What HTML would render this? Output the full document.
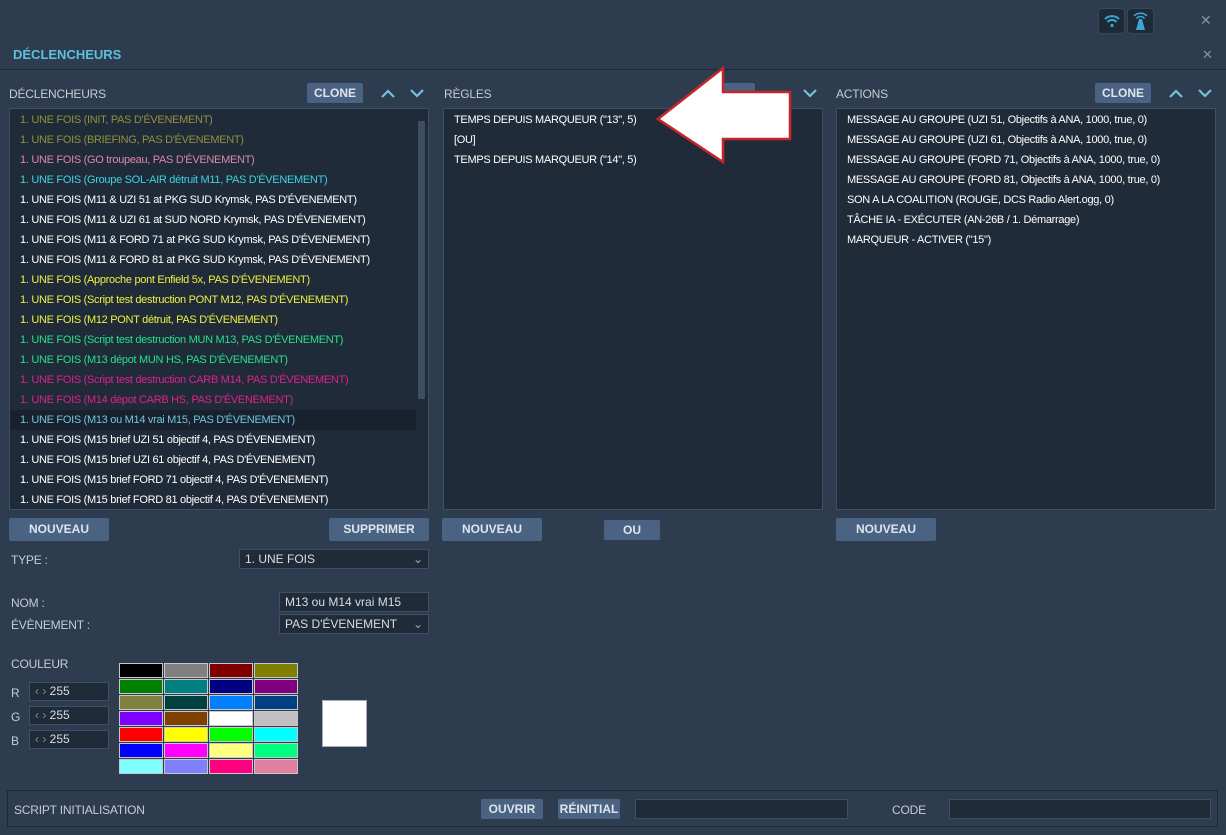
<!DOCTYPE html>
<html><head><meta charset="utf-8"><style>
*{margin:0;padding:0;box-sizing:border-box}
body{width:1226px;height:835px;background:#2d3c4e;font-family:"Liberation Sans","DejaVu Sans",sans-serif;color:#d8dde3;position:relative;overflow:hidden;font-size:11px}
.a{position:absolute}
.lbl{font-size:12px;color:#c5ccd4;letter-spacing:-0.2px}
.btn{position:absolute;background:#4a6383;color:#dfe5ec;font-weight:bold;font-size:12px;text-align:center;border-radius:2px}
.box{position:absolute;background:#202b39;border:1px solid #3f4f63}
.row{height:20px;line-height:20px;padding-left:10px;white-space:nowrap;font-size:11px;letter-spacing:-0.3px}
.inp{position:absolute;background:#202b39;border:1px solid #3f4f63;font-size:12px;color:#d8dde3;padding-left:5px}
.sw{position:absolute;width:44px;height:15px;border:1px solid #c8c8c8}
</style></head><body>
<div class="a" style="left:1098px;top:8px;width:27px;height:26px;background:#1f2a38;border-radius:4px;border:1px solid #35455a"></div>
<svg class="a" style="left:1102px;top:12px" width="20" height="18" viewBox="0 0 20 18"><g fill="none" stroke="#3aa8d0" stroke-width="2"><path d="M3 7a10 10 0 0 1 14 0"/><path d="M5.5 10a6 6 0 0 1 9 0"/></g><circle cx="10" cy="13.5" r="1.6" fill="#3aa8d0"/></svg>
<div class="a" style="left:1127px;top:8px;width:27px;height:26px;background:#1f2a38;border-radius:4px;border:1px solid #35455a"></div>
<svg class="a" style="left:1130px;top:10px" width="21" height="22" viewBox="0 0 21 22"><g fill="none" stroke="#3aa8d0" stroke-width="1.6"><path d="M4 6a9 9 0 0 1 13 0"/><path d="M6.5 8.5a5 5 0 0 1 8 0"/></g><path d="M9 9h3l3 11h-9z" fill="#3aa8d0"/></svg>
<div class="a" style="left:1200px;top:12px;color:#8593a3;font-size:14px">✕</div>
<div class="a" style="left:13px;top:47px;color:#5cc0e0;font-weight:bold;font-size:13px">DÉCLENCHEURS</div>
<div class="a" style="left:1202px;top:47px;color:#8593a3;font-size:13px">✕</div>
<div class="a" style="left:0;top:69px;width:1226px;height:1px;background:#1e2835"></div>

<svg class="a" style="left:0;top:80px" width="1226" height="25"><g fill="none" stroke="#6fc3dd" stroke-width="2.2">
<polyline points="382,17 388,11 394,17"/><polyline points="411,10 417,16 423,10"/>
<polyline points="804,10 810,16 816,10"/>
<polyline points="1170,17 1176,11 1182,17"/><polyline points="1199,10 1205,16 1211,10"/></g></svg>

<div class="a lbl" style="left:9px;top:87px">DÉCLENCHEURS</div>
<div class="btn" style="left:307px;top:83px;width:56px;height:20px;line-height:20px">CLONE</div>
<div class="a lbl" style="left:444px;top:87px">RÈGLES</div>
<div class="btn" style="left:723px;top:83px;width:32px;height:20px"></div>
<div class="a lbl" style="left:836px;top:87px">ACTIONS</div>
<div class="btn" style="left:1095px;top:83px;width:56px;height:20px;line-height:20px">CLONE</div>

<div class="box" style="left:9px;top:108px;width:420px;height:402px;padding-top:1px">
<div class="row" style="color:#8f903f">1. UNE FOIS (INIT, PAS D'ÉVENEMENT)</div>
<div class="row" style="color:#8f903f">1. UNE FOIS (BRIEFING, PAS D'ÉVENEMENT)</div>
<div class="row" style="color:#e085a8">1. UNE FOIS (GO troupeau, PAS D'ÉVENEMENT)</div>
<div class="row" style="color:#3dd3df">1. UNE FOIS (Groupe SOL-AIR détruit M11, PAS D'ÉVENEMENT)</div>
<div class="row" style="color:#fff">1. UNE FOIS (M11 &amp; UZI 51 at PKG SUD Krymsk, PAS D'ÉVENEMENT)</div>
<div class="row" style="color:#fff">1. UNE FOIS (M11 &amp; UZI 61 at SUD NORD Krymsk, PAS D'ÉVENEMENT)</div>
<div class="row" style="color:#fff">1. UNE FOIS (M11 &amp; FORD 71 at PKG SUD Krymsk, PAS D'ÉVENEMENT)</div>
<div class="row" style="color:#fff">1. UNE FOIS (M11 &amp; FORD 81 at PKG SUD Krymsk, PAS D'ÉVENEMENT)</div>
<div class="row" style="color:#f0f040">1. UNE FOIS (Approche pont Enfield 5x, PAS D'ÉVENEMENT)</div>
<div class="row" style="color:#f0f040">1. UNE FOIS (Script test destruction PONT M12, PAS D'ÉVENEMENT)</div>
<div class="row" style="color:#f0f040">1. UNE FOIS (M12 PONT détruit, PAS D'ÉVENEMENT)</div>
<div class="row" style="color:#25e08a">1. UNE FOIS (Script test destruction MUN M13, PAS D'ÉVENEMENT)</div>
<div class="row" style="color:#25e08a">1. UNE FOIS (M13 dépot MUN HS, PAS D'ÉVENEMENT)</div>
<div class="row" style="color:#e0208a">1. UNE FOIS (Script test destruction CARB M14, PAS D'ÉVENEMENT)</div>
<div class="row" style="color:#e0208a">1. UNE FOIS (M14 dépot CARB HS, PAS D'ÉVENEMENT)</div>
<div class="row" style="color:#6cc8e0;background:#18212d;width:406px">1. UNE FOIS (M13 ou M14 vrai M15, PAS D'ÉVENEMENT)</div>
<div class="row" style="color:#fff">1. UNE FOIS (M15 brief UZI 51 objectif 4, PAS D'ÉVENEMENT)</div>
<div class="row" style="color:#fff">1. UNE FOIS (M15 brief UZI 61 objectif 4, PAS D'ÉVENEMENT)</div>
<div class="row" style="color:#fff">1. UNE FOIS (M15 brief FORD 71 objectif 4, PAS D'ÉVENEMENT)</div>
<div class="row" style="color:#fff">1. UNE FOIS (M15 brief FORD 81 objectif 4, PAS D'ÉVENEMENT)</div>
<div class="a" style="left:408px;top:12px;width:7px;height:278px;background:#3e4d60"></div>
</div>
<div class="box" style="left:443px;top:108px;width:380px;height:402px;padding-top:1px">
<div class="row" style="color:#fff">TEMPS DEPUIS MARQUEUR ("13", 5)</div>
<div class="row" style="color:#fff">[OU]</div>
<div class="row" style="color:#fff">TEMPS DEPUIS MARQUEUR ("14", 5)</div>
</div>
<div class="box" style="left:836px;top:108px;width:380px;height:402px;padding-top:1px">
<div class="row" style="color:#fff">MESSAGE AU GROUPE (UZI 51, Objectifs à ANA, 1000, true, 0)</div>
<div class="row" style="color:#fff">MESSAGE AU GROUPE (UZI 61, Objectifs à ANA, 1000, true, 0)</div>
<div class="row" style="color:#fff">MESSAGE AU GROUPE (FORD 71, Objectifs à ANA, 1000, true, 0)</div>
<div class="row" style="color:#fff">MESSAGE AU GROUPE (FORD 81, Objectifs à ANA, 1000, true, 0)</div>
<div class="row" style="color:#fff">SON A LA COALITION (ROUGE, DCS Radio Alert.ogg, 0)</div>
<div class="row" style="color:#fff">TÂCHE IA - EXÉCUTER (AN-26B / 1. Démarrage)</div>
<div class="row" style="color:#fff">MARQUEUR - ACTIVER ("15")</div>
</div>

<svg class="a" style="left:0;top:0" width="1226" height="200"><polygon points="658,119 723,68 723,92 790,92 790,139 723,139 723,162" fill="#fff" stroke="#c4262c" stroke-width="2.5"/></svg>

<div class="btn" style="left:9px;top:518px;width:100px;height:23px;line-height:23px">NOUVEAU</div>
<div class="btn" style="left:329px;top:518px;width:100px;height:23px;line-height:23px">SUPPRIMER</div>
<div class="btn" style="left:442px;top:518px;width:100px;height:23px;line-height:23px">NOUVEAU</div>
<div class="btn" style="left:604px;top:520px;width:56px;height:20px;line-height:20px">OU</div>
<div class="btn" style="left:836px;top:518px;width:100px;height:23px;line-height:23px">NOUVEAU</div>

<div class="a lbl" style="left:11px;top:553px">TYPE :</div>
<div class="inp" style="left:239px;top:549px;width:190px;height:20px;line-height:18px">1. UNE FOIS<span style="position:absolute;right:5px;color:#9aa">⌄</span></div>
<div class="a lbl" style="left:11px;top:596px">NOM :</div>
<div class="inp" style="left:279px;top:592px;width:150px;height:20px;line-height:18px">M13 ou M14 vrai M15</div>
<div class="a lbl" style="left:11px;top:618px">ÉVÈNEMENT :</div>
<div class="inp" style="left:279px;top:614px;width:150px;height:20px;line-height:18px">PAS D'ÉVENEMENT<span style="position:absolute;right:5px;color:#9aa">⌄</span></div>
<div class="a lbl" style="left:11px;top:657px">COULEUR</div>
<div class="a lbl" style="left:11px;top:686px">R</div><div class="inp" style="left:29px;top:682px;width:80px;height:19px;line-height:17px"><span style="color:#889">‹ › </span> 255</div>
<div class="a lbl" style="left:11px;top:710px">G</div><div class="inp" style="left:29px;top:706px;width:80px;height:19px;line-height:17px"><span style="color:#889">‹ › </span> 255</div>
<div class="a lbl" style="left:11px;top:734px">B</div><div class="inp" style="left:29px;top:730px;width:80px;height:19px;line-height:17px"><span style="color:#889">‹ › </span> 255</div>

<div class="sw" style="left:119px;top:663px;background:#000"></div><div class="sw" style="left:164px;top:663px;background:#808080"></div><div class="sw" style="left:209px;top:663px;background:#800000"></div><div class="sw" style="left:254px;top:663px;background:#808000"></div>
<div class="sw" style="left:119px;top:679px;background:#008000"></div><div class="sw" style="left:164px;top:679px;background:#008080"></div><div class="sw" style="left:209px;top:679px;background:#000080"></div><div class="sw" style="left:254px;top:679px;background:#800080"></div>
<div class="sw" style="left:119px;top:695px;background:#808040"></div><div class="sw" style="left:164px;top:695px;background:#004040"></div><div class="sw" style="left:209px;top:695px;background:#0080ff"></div><div class="sw" style="left:254px;top:695px;background:#004080"></div>
<div class="sw" style="left:119px;top:711px;background:#8000ff"></div><div class="sw" style="left:164px;top:711px;background:#804000"></div><div class="sw" style="left:209px;top:711px;background:#fff"></div><div class="sw" style="left:254px;top:711px;background:#c0c0c0"></div>
<div class="sw" style="left:119px;top:727px;background:#f00"></div><div class="sw" style="left:164px;top:727px;background:#ff0"></div><div class="sw" style="left:209px;top:727px;background:#0f0"></div><div class="sw" style="left:254px;top:727px;background:#0ff"></div>
<div class="sw" style="left:119px;top:743px;background:#00f"></div><div class="sw" style="left:164px;top:743px;background:#f0f"></div><div class="sw" style="left:209px;top:743px;background:#ffff80"></div><div class="sw" style="left:254px;top:743px;background:#00ff80"></div>
<div class="sw" style="left:119px;top:759px;background:#80ffff"></div><div class="sw" style="left:164px;top:759px;background:#8080ff"></div><div class="sw" style="left:209px;top:759px;background:#ff0080"></div><div class="sw" style="left:254px;top:759px;background:#e080a0"></div>
<div class="a" style="left:322px;top:700px;width:45px;height:47px;background:#fff;border:1px solid #aab"></div>

<div class="a" style="left:7px;top:790px;width:1211px;height:37px;border:1px solid #1e2835"></div>
<div class="a lbl" style="left:14px;top:803px">SCRIPT INITIALISATION</div>
<div class="btn" style="left:481px;top:799px;width:62px;height:20px;line-height:20px">OUVRIR</div>
<div class="btn" style="left:558px;top:799px;width:62px;height:20px;line-height:20px">RÉINITIAL</div>
<div class="inp" style="left:635px;top:799px;width:213px;height:20px"></div>
<div class="a lbl" style="left:892px;top:803px">CODE</div>
<div class="inp" style="left:949px;top:799px;width:262px;height:20px"></div>
</body></html>
